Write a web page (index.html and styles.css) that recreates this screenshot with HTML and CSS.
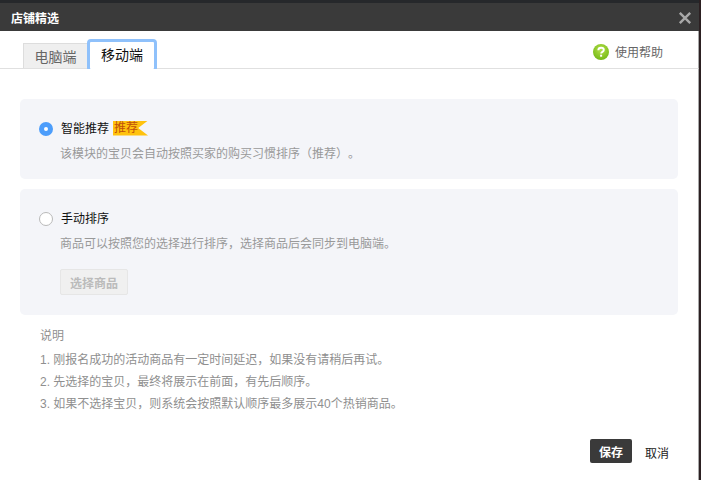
FILE: index.html
```html
<!DOCTYPE html>
<html lang="zh-CN">
<head>
<meta charset="utf-8">
<title>店铺精选</title>
<link rel="stylesheet" href="styles.css">
</head>
<body>
<div class="dialog">
  <header class="titlebar">
    <span class="title">店铺精选</span>
    <svg class="close" width="14" height="14" viewBox="0 0 14 14"><path d="M1.8 1.8l10.4 10.4M12.2 1.8l-10.4 10.4" stroke="#a8a8a8" stroke-width="2.4" fill="none"/></svg>
  </header>
  <nav class="tabs">
    <span class="tab">电脑端</span>
    <span class="tab active">移动端</span>
    <span class="help">
      <svg class="help-icon" width="16" height="16" viewBox="0 0 16 16"><defs><radialGradient id="helpfill" cx="0.5" cy="0.35" r="0.7"><stop offset="0" stop-color="#b5e04a"/><stop offset="1" stop-color="#6fb612"/></radialGradient></defs><circle cx="8" cy="8" r="8" fill="url(#helpfill)"/><path d="M5.3 6.2c0-1.6 1.2-2.5 2.8-2.5s2.7 1 2.7 2.2c0 2-2.7 1.9-2.7 3.7" fill="none" stroke="#fff" stroke-width="1.9"/><rect x="7.1" y="10.7" width="2" height="2" fill="#fff"/></svg>
      使用帮助
    </span>
  </nav>
  <main class="content">
    <section class="card card-smart">
      <div class="option">
        <span class="radio checked"></span>
        <span class="label">智能推荐</span>
        <span class="ribbon">推荐</span>
      </div>
      <p class="desc">该模块的宝贝会自动按照买家的购买习惯排序（推荐）。</p>
    </section>
    <section class="card card-manual">
      <div class="option">
        <span class="radio"></span>
        <span class="label">手动排序</span>
      </div>
      <p class="desc">商品可以按照您的选择进行排序，选择商品后会同步到电脑端。</p>
      <button class="pick" type="button">选择商品</button>
    </section>
    <section class="notes">
      <h2>说明</h2>
      <p>1. 刚报名成功的活动商品有一定时间延迟，如果没有请稍后再试。</p>
      <p>2. 先选择的宝贝，最终将展示在前面，有先后顺序。</p>
      <p>3. 如果不选择宝贝，则系统会按照默认顺序最多展示40个热销商品。</p>
    </section>
    <footer class="actions">
      <button class="save" type="button">保存</button>
      <span class="cancel">取消</span>
    </footer>
  </main>
</div>
</body>
</html>
```
FILE: styles.css
```css
html, body { margin: 0; padding: 0; }
body {
  width: 701px;
  height: 480px;
  overflow: hidden;
  background: #2c2022;
  font-family: "Liberation Sans", "Noto Sans CJK SC", sans-serif;
  font-size: 12px;
  text-spacing-trim: space-all;
}
.dialog {
  width: 699px;
  height: 480px;
  display: flex;
  flex-direction: column;
  border-top: 3px solid #26282b;
  box-sizing: border-box;
}
.titlebar {
  height: 28px;
  flex: none;
  background: #3a3a3a;
  display: flex;
  align-items: center;
  justify-content: space-between;
  padding: 0 7px 0 11px;
}
.title { color: #fff; font-size: 12px; font-weight: bold; }
.close { margin-top: 2px; }
.tabs {
  height: 38px;
  flex: none;
  box-sizing: border-box;
  background: #fff;
  border-bottom: 1px solid #e0e0e0;
  border-right: 1px solid #a8a8a8;
  display: flex;
  align-items: flex-end;
  padding-left: 23px;
}
.tab {
  width: 65px;
  height: 25px;
  box-sizing: border-box;
  display: flex;
  align-items: center;
  justify-content: center;
  padding-bottom: 1px;
  background: #efefef;
  border: 1px solid #ddd;
  border-bottom: 0;
  color: #666;
  font-size: 14px;
}
.tab.active {
  width: 70px;
  height: 33px;
  margin: 0 0 -4px -1px;
  padding-bottom: 3px;
  background: #fff;
  color: #111;
  border: 3px solid #8fc1fb;
  border-radius: 4px;
}
.help {
  margin: 4px 35px 0 auto;
  align-self: center;
  display: flex;
  align-items: center;
  gap: 6px;
  color: #666;
  font-size: 12px;
}
.content {
  flex: 1;
  background: #fff;
  border-right: 1px solid #a8a8a8;
  padding: 30px 20px 0;
}
.card {
  background: #f4f5f9;
  border-radius: 5px;
  padding: 20px 19px 0;
  box-sizing: border-box;
}
.card-smart { height: 80px; margin-bottom: 10px; }
.card-manual { height: 126px; }
.option { display: flex; align-items: center; height: 18px; }
.radio {
  width: 14px;
  height: 14px;
  margin-top: 2px;
  border-radius: 50%;
  box-sizing: border-box;
  border: 1px solid #b9b9b9;
  background: #fff;
  margin-right: 8px;
}
.radio.checked { border: 5px solid #4c9dfb; }
.label { color: #111; font-size: 12px; padding-bottom: 2px; }
.ribbon {
  margin-left: 4px;
  width: 35px;
  height: 15px;
  padding-left: 1px;
  box-sizing: border-box;
  background: #ffc20e;
  color: #c0500a;
  line-height: 15px;
  clip-path: polygon(0 0, 100% 0, 72% 50%, 100% 100%, 0 100%);
}
.desc { margin: 8px 0 0 21px; color: #999; font-size: 12px; line-height: 18px; }
.pick {
  display: block;
  margin: 16px 0 0 21px;
  width: 68px;
  height: 26px;
  padding: 0;
  background: #f0f0f0;
  border: 1px solid #e6e6e6;
  border-radius: 2px;
  color: #bbb;
  font: bold 12px "Liberation Sans", "Noto Sans CJK SC", sans-serif;
}
.notes { margin: 13px 0 0 20px; color: #8f8f8f; font-size: 12px; }
.notes h2 { margin: 0 0 5px; font-size: 12px; font-weight: normal; line-height: 16px; }
.notes p { margin: 0; line-height: 22px; }
.actions {
  display: flex;
  align-items: center;
  justify-content: flex-end;
  margin-top: 24px;
  padding-right: 9px;
  gap: 13px;
}
.save {
  width: 42px;
  height: 24px;
  padding: 0;
  background: #3a3a3a;
  border: 0;
  border-radius: 2px;
  color: #fff;
  font: bold 12px "Liberation Sans", "Noto Sans CJK SC", sans-serif;
}
.cancel { color: #222; font-size: 12px; padding-top: 2px; }
```
